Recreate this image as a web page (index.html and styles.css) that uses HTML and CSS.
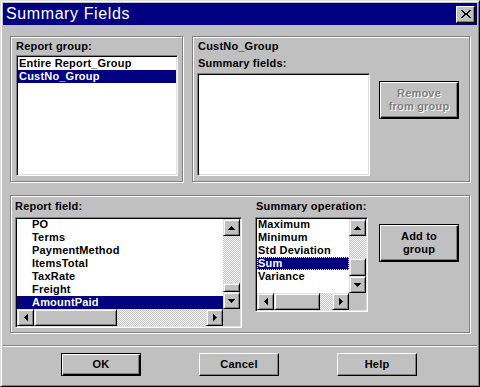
FILE: index.html
```html
<!DOCTYPE html>
<html lang="en">
<head>
    <meta charset="UTF-8">
    <title>Summary Fields</title>
    <link rel="stylesheet" href="styles.css">
</head>
<body>
    <div class="window">
        <div class="titlebar">
            <span class="title">Summary Fields</span>
            <button class="close">
                <svg width="10" height="8" viewBox="0 0 10 8" shape-rendering="crispEdges"><path d="M0 0h2v1H0zM8 0h2v1H8zM1 1h2v1H1zM7 1h2v1H7zM2 2h2v1H2zM6 2h2v1H6zM3 3h4v2H3zM2 5h2v1H2zM6 5h2v1H6zM1 6h2v1H1zM7 6h2v1H7zM0 7h2v1H0zM8 7h2v1H8z"/></svg>
            </button>
        </div>

        <div class="content">
            <div class="top-row">
                <div class="group group-report">
                    <div class="label">Report group:</div>
                    <div class="listbox list-groups">
                        <div class="item">Entire Report_Group</div>
                        <div class="item selected">CustNo_Group</div>
                    </div>
                </div>

                <div class="group group-summary">
                    <div class="summary-col">
                        <div class="label">CustNo_Group</div>
                        <div class="label label-second">Summary fields:</div>
                        <div class="listbox list-fields"></div>
                    </div>
                    <button class="btn btn-frame btn-tall btn-remove" disabled>Remove<br>from group</button>
                </div>
            </div>

            <div class="group group-bottom">
                <div class="field-col">
                    <div class="label">Report field:</div>
                    <div class="listbox scroll-list list-report">
                        <div class="items">
                            <div class="item">PO</div>
                            <div class="item">Terms</div>
                            <div class="item">PaymentMethod</div>
                            <div class="item">ItemsTotal</div>
                            <div class="item">TaxRate</div>
                            <div class="item">Freight</div>
                            <div class="item selected">AmountPaid</div>
                        </div>
                        <div class="vscroll">
                            <div class="sbtn"><svg width="7" height="4" viewBox="0 0 7 4" shape-rendering="crispEdges"><path d="M3 0h1v1h1v1h1v1h1v1H0V3h1V2h1V1h1z"/></svg></div>
                            <div class="track"></div>
                            <div class="sbtn thumb thumb-report-v"></div>
                            <div class="sbtn"><svg width="7" height="4" viewBox="0 0 7 4" shape-rendering="crispEdges"><path d="M0 0h7v1H6v1H5v1H4v1H3V3H2V2H1V1H0z"/></svg></div>
                        </div>
                        <div class="hscroll">
                            <div class="sbtn"><svg width="4" height="7" viewBox="0 0 4 7" shape-rendering="crispEdges"><path d="M4 0v7H3V6H2V5H1V4H0V3h1V2h1V1h1V0z"/></svg></div>
                            <div class="sbtn thumb thumb-report-h"></div>
                            <div class="track"></div>
                            <div class="sbtn"><svg width="4" height="7" viewBox="0 0 4 7" shape-rendering="crispEdges"><path d="M0 0h1v1h1v1h1v1h1v1H3v1H2v1H1v1H0z"/></svg></div>
                        </div>
                        <div class="corner"></div>
                    </div>
                </div>

                <div class="op-col">
                    <div class="label">Summary operation:</div>
                    <div class="listbox scroll-list list-op">
                        <div class="items">
                            <div class="item">Maximum</div>
                            <div class="item">Minimum</div>
                            <div class="item">Std Deviation</div>
                            <div class="item selected focused">Sum</div>
                            <div class="item">Variance</div>
                        </div>
                        <div class="vscroll">
                            <div class="sbtn"><svg width="7" height="4" viewBox="0 0 7 4" shape-rendering="crispEdges"><path d="M3 0h1v1h1v1h1v1h1v1H0V3h1V2h1V1h1z"/></svg></div>
                            <div class="track"></div>
                            <div class="sbtn thumb thumb-op-v"></div>
                            <div class="sbtn"><svg width="7" height="4" viewBox="0 0 7 4" shape-rendering="crispEdges"><path d="M0 0h7v1H6v1H5v1H4v1H3V3H2V2H1V1H0z"/></svg></div>
                        </div>
                        <div class="hscroll">
                            <div class="sbtn"><svg width="4" height="7" viewBox="0 0 4 7" shape-rendering="crispEdges"><path d="M4 0v7H3V6H2V5H1V4H0V3h1V2h1V1h1V0z"/></svg></div>
                            <div class="sbtn thumb thumb-op-h"></div>
                            <div class="track"></div>
                            <div class="sbtn"><svg width="4" height="7" viewBox="0 0 4 7" shape-rendering="crispEdges"><path d="M0 0h1v1h1v1h1v1h1v1H3v1H2v1H1v1H0z"/></svg></div>
                        </div>
                        <div class="corner"></div>
                    </div>
                </div>

                <button class="btn btn-frame btn-tall btn-add">Add to<br>group</button>
            </div>
        </div>

        <div class="separator"></div>

        <div class="buttons">
            <button class="btn btn-frame">OK</button>
            <button class="btn">Cancel</button>
            <button class="btn">Help</button>
        </div>
    </div>
</body>
</html>
```

FILE: styles.css
```css
body {
    margin: 0;
    background-color: #c0c0c0;
    font-family: "Liberation Sans", Arial, sans-serif;
    font-size: 11px;
    font-weight: bold;
    letter-spacing: 0.2px;
    color: #000;
}

.window {
    width: 480px;
    height: 387px;
    box-sizing: border-box;
    display: flex;
    flex-direction: column;
    padding: 2px;
    background-color: #c0c0c0;
    border: 1px solid;
    border-color: #dfdfdf #000 #000 #dfdfdf;
    box-shadow: inset 1px 1px #fff, inset -1px -1px #808080;
}

.titlebar {
    height: 22px;
    display: flex;
    align-items: center;
    justify-content: space-between;
    padding: 0 2px 0 3px;
    background-color: #000080;
    color: #fff;
}

.title {
    font-size: 16px;
    font-weight: normal;
    letter-spacing: 0.6px;
}

.close {
    width: 19px;
    height: 17px;
    box-sizing: border-box;
    padding: 0;
    display: flex;
    align-items: center;
    justify-content: center;
    background-color: #c0c0c0;
    border: 1px solid;
    border-color: #fff #000 #000 #fff;
    box-shadow: inset -1px -1px #808080;
}

.content {
    padding: 11px 7px 0;
}

.top-row {
    display: flex;
    gap: 9px;
}

.group {
    box-sizing: border-box;
    border: 1px solid #808080;
    box-shadow: 1px 1px #fff, inset 1px 1px #fff;
}

.label {
    line-height: 13px;
    white-space: nowrap;
}

.group-report {
    width: 173px;
    height: 146px;
    padding: 3px 0 0 5px;
}

.group-report .label {
    margin-bottom: 2px;
}

.group-summary {
    width: 278px;
    height: 146px;
    padding: 3px 0 0 4px;
    display: flex;
}

.group-summary .label {
    padding-left: 1px;
}

.label-second {
    margin-top: 4px;
    margin-bottom: 3px;
}

.group-bottom {
    width: 460px;
    height: 138px;
    margin-top: 13px;
    padding: 4px 0 0 4px;
    display: flex;
}

.group-bottom .label {
    margin-bottom: 4px;
}

.op-col {
    margin-left: 13px;
}

.op-col .label {
    padding-left: 1px;
}

/* list boxes */
.listbox {
    box-sizing: border-box;
    padding: 1px;
    background-color: #fff;
    border: 1px solid;
    border-color: #808080 #fff #fff #808080;
    box-shadow: inset 1px 1px #000, inset -1px -1px #dfdfdf;
    overflow: hidden;
}

.list-groups {
    width: 162px;
    height: 121px;
}

.list-fields {
    width: 173px;
    height: 103px;
}

.item {
    height: 13px;
    line-height: 13px;
    padding-left: 1px;
    white-space: nowrap;
}

.item.selected {
    background-color: #000080;
    color: #fff;
}

.item.focused {
    outline: 1px dotted #ffff80;
    outline-offset: -1px;
}

.scroll-list {
    display: grid;
    grid-template-columns: 1fr 17px;
    grid-template-rows: 1fr 17px;
}

.list-report {
    width: 227px;
    height: 111px;
}

.list-report .item {
    padding-left: 15px;
}

.list-op {
    width: 113px;
    height: 95px;
}

.items {
    margin-top: -1px;
    overflow: hidden;
    position: relative;
    z-index: 0;
}

/* scroll bars */
.vscroll {
    display: flex;
    flex-direction: column;
}

.hscroll {
    display: flex;
}

.sbtn {
    width: 17px;
    height: 17px;
    flex: none;
    box-sizing: border-box;
    display: flex;
    align-items: center;
    justify-content: center;
    background-color: #c0c0c0;
    border: 1px solid;
    border-color: #dfdfdf #000 #000 #dfdfdf;
    box-shadow: inset 1px 1px #fff, inset -1px -1px #808080;
}

.track {
    flex: 1;
    background-color: #c0c0c0;
    background-image: repeating-conic-gradient(#fff 0 25%, #c0c0c0 0 50%);
    background-size: 2px 2px;
}

.thumb-report-v {
    height: 9px;
}

.thumb-report-h {
    width: 83px;
}

.thumb-op-v {
    height: 18px;
}

.thumb-op-h {
    width: 46px;
}

.corner {
    background-color: #c0c0c0;
}

/* push buttons */
.btn {
    width: 80px;
    height: 23px;
    box-sizing: border-box;
    padding: 0;
    font-family: inherit;
    font-size: 11px;
    font-weight: bold;
    letter-spacing: 0.2px;
    line-height: 13px;
    color: #000;
    background-color: #c0c0c0;
    border: 1px solid;
    border-color: #fff #000 #000 #fff;
    box-shadow: inset -1px -1px #808080;
}

.btn-frame {
    border: 1px solid #000;
    box-shadow: inset 1px 1px #fff, inset -1px -1px #000, inset -2px -2px #808080;
}

.btn-tall {
    height: 38px;
}

.btn-remove {
    margin: 41px 0 0 9px;
}

.btn-remove:disabled {
    color: #808080;
    text-shadow: 1px 1px #fff;
}

.btn-add {
    margin: 24px 0 0 11px;
}

.separator {
    height: 0;
    margin-top: 12px;
    border-top: 1px solid #808080;
    border-bottom: 1px solid #fff;
}

.buttons {
    display: flex;
    gap: 58px;
    margin-top: 6px;
    padding-left: 58px;
}
```
